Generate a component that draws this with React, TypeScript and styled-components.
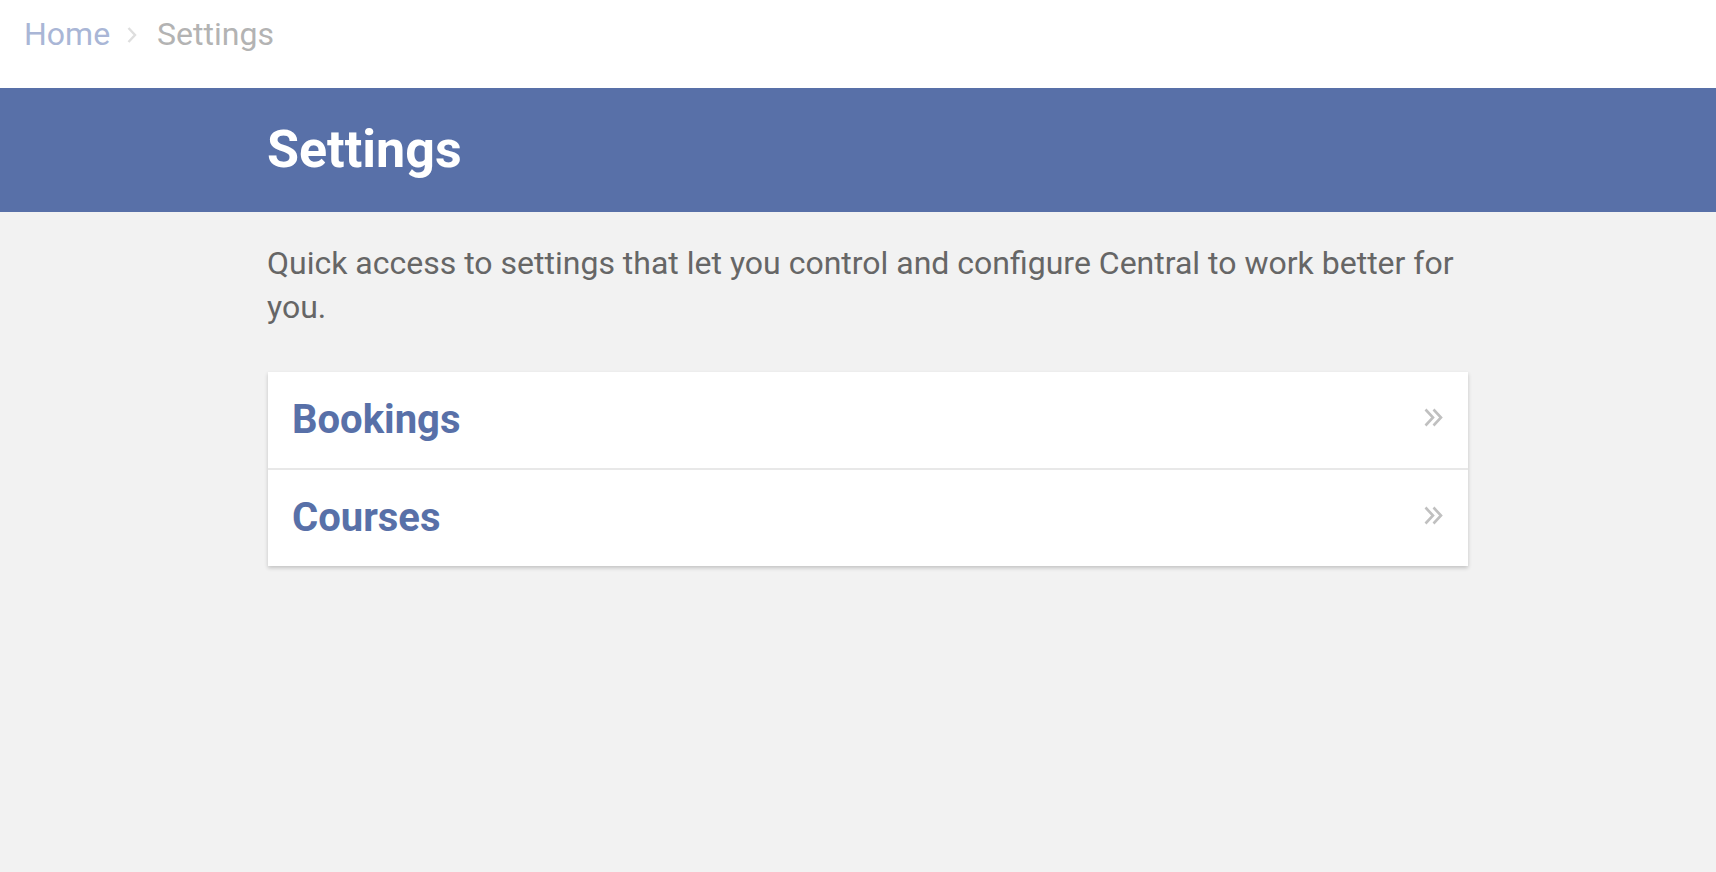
import React from "react";
import styled, { createGlobalStyle } from "styled-components";

const GlobalStyle = createGlobalStyle`
  html, body {
    margin: 0;
    padding: 0;
    background: #f2f2f2;
    font-family: Roboto, "Liberation Sans", sans-serif;
  }
  * { box-sizing: border-box; }
`;

const Page = styled.div`
  min-height: 872px;
  background: #f2f2f2;
  display: flex;
  flex-direction: column;
`;

const TopBar = styled.nav`
  height: 88px;
  background: #ffffff;
  padding: 16px 24px 0;
  display: flex;
  align-items: flex-start;
  font-size: 32px;
  line-height: 37.5px;
`;

const Crumb = styled.span<{ $active?: boolean }>`
  color: ${(p) => (p.$active ? "#b3b3b3" : "#a9b6d6")};
`;

const CrumbSep = styled.span`
  display: flex;
  align-items: center;
  height: 37.5px;
  margin: 0 19px 0 16px;
`;

const Banner = styled.header`
  height: 124px;
  background: #5870a8;
  display: flex;
  align-items: center;
`;

const Inner = styled.div`
  width: 1200px;
  margin-left: 267px;
`;

const Title = styled.h1`
  margin: 0;
  color: #ffffff;
  font-size: 52px;
  font-weight: 700;
  line-height: 1.172;
`;

const Content = styled(Inner)`
  padding-top: 29px;
  margin-left: 268px;
`;

const Intro = styled.p`
  margin: 0 0 43px -1px;
  width: 1200px;
  color: #666666;
  font-size: 32px;
  line-height: 44px;
`;

const Card = styled.div`
  background: #ffffff;
  box-shadow: 0 2px 4px rgba(0, 0, 0, 0.2);
  display: flex;
  flex-direction: column;
`;

const Row = styled.a`
  height: 96px;
  display: flex;
  align-items: center;
  justify-content: space-between;
  padding: 0 25px 0 24px;
  text-decoration: none;
  & + & {
    height: 98px;
    border-top: 2px solid #e8e8e8;
  }
`;

const RowTitle = styled.span`
  color: #5870a8;
  font-size: 40px;
  font-weight: 700;
  line-height: 1.172;
`;

const Chevrons = styled.svg`
  width: 19px;
  height: 19px;
  margin-top: -5px;
`;

const Chevron = () => (
  <svg width="12" height="20" viewBox="0 0 12 20" fill="none">
    <polyline points="2.5,3 9,10 2.5,17" stroke="#dedede" strokeWidth="2.4" />
  </svg>
);

const DoubleChevron = () => (
  <Chevrons viewBox="0 0 19 19" fill="none">
    <polyline points="1.5,1.5 9,9.5 1.5,17.5" stroke="#c0c0c0" strokeWidth="2.6" />
    <polyline points="9.5,1.5 17,9.5 9.5,17.5" stroke="#c0c0c0" strokeWidth="2.6" />
  </Chevrons>
);

const items = ["Bookings", "Courses"];

export default function App() {
  return (
    <Page>
      <GlobalStyle />
      <TopBar>
        <Crumb>Home</Crumb>
        <CrumbSep>
          <Chevron />
        </CrumbSep>
        <Crumb $active>Settings</Crumb>
      </TopBar>
      <Banner>
        <Inner>
          <Title>Settings</Title>
        </Inner>
      </Banner>
      <Content>
        <Intro>
          Quick access to settings that let you control and configure Central to work better for you.
        </Intro>
        <Card>
          {items.map((t) => (
            <Row key={t} href="#">
              <RowTitle>{t}</RowTitle>
              <DoubleChevron />
            </Row>
          ))}
        </Card>
      </Content>
    </Page>
  );
}
